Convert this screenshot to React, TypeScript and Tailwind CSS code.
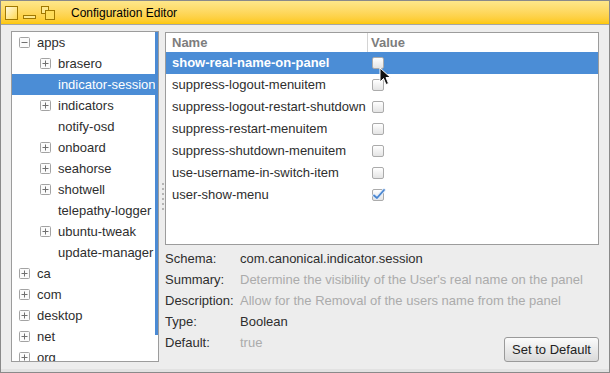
import React from "react";

const font = { fontFamily: '"Liberation Sans", Arial, sans-serif' };

type TreeItem = { label: string; depth: number; expander?: "plus" | "minus"; selected?: boolean };

const tree: TreeItem[] = [
  { label: "apps", depth: 0, expander: "minus" },
  { label: "brasero", depth: 1, expander: "plus" },
  { label: "indicator-session", depth: 1, selected: true },
  { label: "indicators", depth: 1, expander: "plus" },
  { label: "notify-osd", depth: 1 },
  { label: "onboard", depth: 1, expander: "plus" },
  { label: "seahorse", depth: 1, expander: "plus" },
  { label: "shotwell", depth: 1, expander: "plus" },
  { label: "telepathy-logger", depth: 1 },
  { label: "ubuntu-tweak", depth: 1, expander: "plus" },
  { label: "update-manager", depth: 1 },
  { label: "ca", depth: 0, expander: "plus" },
  { label: "com", depth: 0, expander: "plus" },
  { label: "desktop", depth: 0, expander: "plus" },
  { label: "net", depth: 0, expander: "plus" },
  { label: "org", depth: 0, expander: "plus" },
];

const keys = [
  { name: "show-real-name-on-panel", checked: false, selected: true },
  { name: "suppress-logout-menuitem", checked: false },
  { name: "suppress-logout-restart-shutdown", checked: false },
  { name: "suppress-restart-menuitem", checked: false },
  { name: "suppress-shutdown-menuitem", checked: false },
  { name: "use-username-in-switch-item", checked: false },
  { name: "user-show-menu", checked: true },
];

const Expander = ({ kind }: { kind: "plus" | "minus" }) => (
  <svg width="11" height="11" viewBox="0 0 11 11">
    <rect x="0.5" y="0.5" width="10" height="10" rx="1" fill="#fbfbfb" stroke="#a3a3a3" />
    <line x1="2.5" y1="5.5" x2="8.5" y2="5.5" stroke="#707070" />
    {kind === "plus" && <line x1="5.5" y1="2.5" x2="5.5" y2="8.5" stroke="#707070" />}
  </svg>
);

const Checkbox = ({ checked }: { checked: boolean }) => (
  <div className="relative w-[12px] h-[12px] rounded-[2px] border border-[#ababab] bg-gradient-to-b from-white to-[#e4e4e4]">
    {checked && (
      <svg className="absolute left-[-1px] top-[-2px]" width="14" height="13" viewBox="0 0 14 13">
        <path d="M2 7.5 L5 10 L12 2" fill="none" stroke="#dfe9f7" strokeWidth="3.5" strokeLinecap="round" strokeLinejoin="round" />
        <path d="M2 7.5 L5 10 L12 2" fill="none" stroke="#4a86d0" strokeWidth="1.8" strokeLinecap="round" strokeLinejoin="round" />
      </svg>
    )}
  </div>
);

const TitleButtons = () => (
  <div className="flex items-center gap-[5px] pl-[4px]">
    <svg width="13" height="14" viewBox="0 0 13 14">
      <defs>
        <linearGradient id="tb" x1="0" y1="0" x2="1" y2="1">
          <stop offset="0" stopColor="#fffbe6" />
          <stop offset="1" stopColor="#fdd64a" />
        </linearGradient>
      </defs>
      <rect x="0.5" y="0.5" width="12" height="13" fill="url(#tb)" stroke="#a07800" />
    </svg>
    <svg width="13" height="14" viewBox="0 0 13 14">
      <rect x="0.5" y="9.5" width="12" height="3" fill="#fde88c" stroke="#a07800" />
    </svg>
    <svg width="14" height="14" viewBox="0 0 14 14">
      <rect x="0.5" y="0.5" width="7" height="7" fill="#fde88c" stroke="#a07800" />
      <rect x="4.5" y="4.5" width="9" height="9" fill="#fddc5a" stroke="#a07800" />
    </svg>
  </div>
);

export default function App() {
  return (
    <div
      className="relative w-[610px] h-[373px] overflow-hidden bg-[#ededed] border border-[#8a8a8a] flex flex-col text-[13px] text-[#2e2e2e]"
      style={font}
    >
      {/* title bar */}
      <div className="h-[24px] shrink-0 flex items-center bg-gradient-to-b from-[#fee78a] to-[#fdc800] border-b border-[#a5a5a5]">
        <TitleButtons />
        <span className="ml-[16px] text-[12px] text-black">Configuration Editor</span>
      </div>

      <div className="flex-1 flex pl-[10px] pt-[6px] border-b-[3px] border-[#e2e2e2]">
        {/* tree */}
        <div className="relative w-[148px] h-[331px] shrink-0 bg-white border border-[#9c9c9c] overflow-hidden">
          <div className="absolute right-0 top-0 w-[3px] h-[303px] bg-[#4a8ad4]" />
          {tree.map((t) => (
            <div
              key={t.label}
              className={`h-[21px] flex items-center mr-[3px] ${t.selected ? "bg-[#4b8dd6] text-white" : ""}`}
            >
              <div className={`w-[25px] shrink-0 flex justify-center ${t.depth === 1 ? "ml-[21px]" : "ml-[0px]"}`}>
                {t.expander && <Expander kind={t.expander} />}
              </div>
              <span className="whitespace-nowrap">{t.label}</span>
            </div>
          ))}
        </div>

        {/* splitter */}
        <div className="w-[6px] shrink-0 flex flex-col items-end pr-px justify-center gap-[3px] h-[331px]">
          {Array.from({ length: 6 }).map((_, i) => (
            <div key={i} className="w-[2px] h-[2px] bg-[#b4b4b4]" />
          ))}
        </div>

        {/* right panel */}
        <div className="w-[434px] h-[331px] flex flex-col">
          <div className="mt-px h-[213px] shrink-0 bg-white border border-[#9c9c9c] flex flex-col">
            <div className="h-[19px] flex font-bold text-[#7d7d7d]">
              <div className="w-[201px] pl-[6px] flex items-center">Name</div>
              <div className="flex-1 border-l border-[#d4d4d4] pl-[3px] flex items-center">Value</div>
            </div>
            {keys.map((k) => (
              <div
                key={k.name}
                className={`h-[22px] flex items-center ${k.selected ? "bg-[#4b8dd6] text-white font-bold" : ""}`}
              >
                <div className="w-[201px] pl-[6px] whitespace-nowrap">{k.name}</div>
                <div className="pl-[5px]">
                  <Checkbox checked={k.checked} />
                </div>
              </div>
            ))}
          </div>

          <div className="flex-1 flex">
            <div className="flex-1 pt-[3px] grid grid-cols-[75px_1fr] auto-rows-[21px] items-center">
              <span>Schema:</span>
              <span>com.canonical.indicator.session</span>
              <span>Summary:</span>
              <span className="text-[#ababab] whitespace-nowrap">Determine the visibility of the User's real name on the panel</span>
              <span>Description:</span>
              <span className="text-[#ababab] whitespace-nowrap">Allow for the Removal of the users name from the panel</span>
              <span>Type:</span>
              <span>Boolean</span>
              <span>Default:</span>
              <span className="text-[#ababab]">true</span>
            </div>
          </div>
          <div className="absolute right-[10px] bottom-[10px]">
            <button className="w-[95px] h-[25px] rounded-[3px] border border-[#9a9a9a] bg-gradient-to-b from-[#fbfbfb] to-[#dadada] text-[13px] text-[#222]">
              Set to Default
            </button>
          </div>
        </div>
      </div>

      {/* mouse pointer */}
      <svg className="absolute left-[378px] top-[66px]" width="14" height="20" viewBox="0 0 14 20">
        <path d="M1 1 L1 15 L4.5 11.5 L7 17.5 L9.5 16.5 L7 10.5 L11.5 10.5 Z" fill="#111" stroke="#fff" strokeWidth="1" strokeLinejoin="round" />
      </svg>
    </div>
  );
}
